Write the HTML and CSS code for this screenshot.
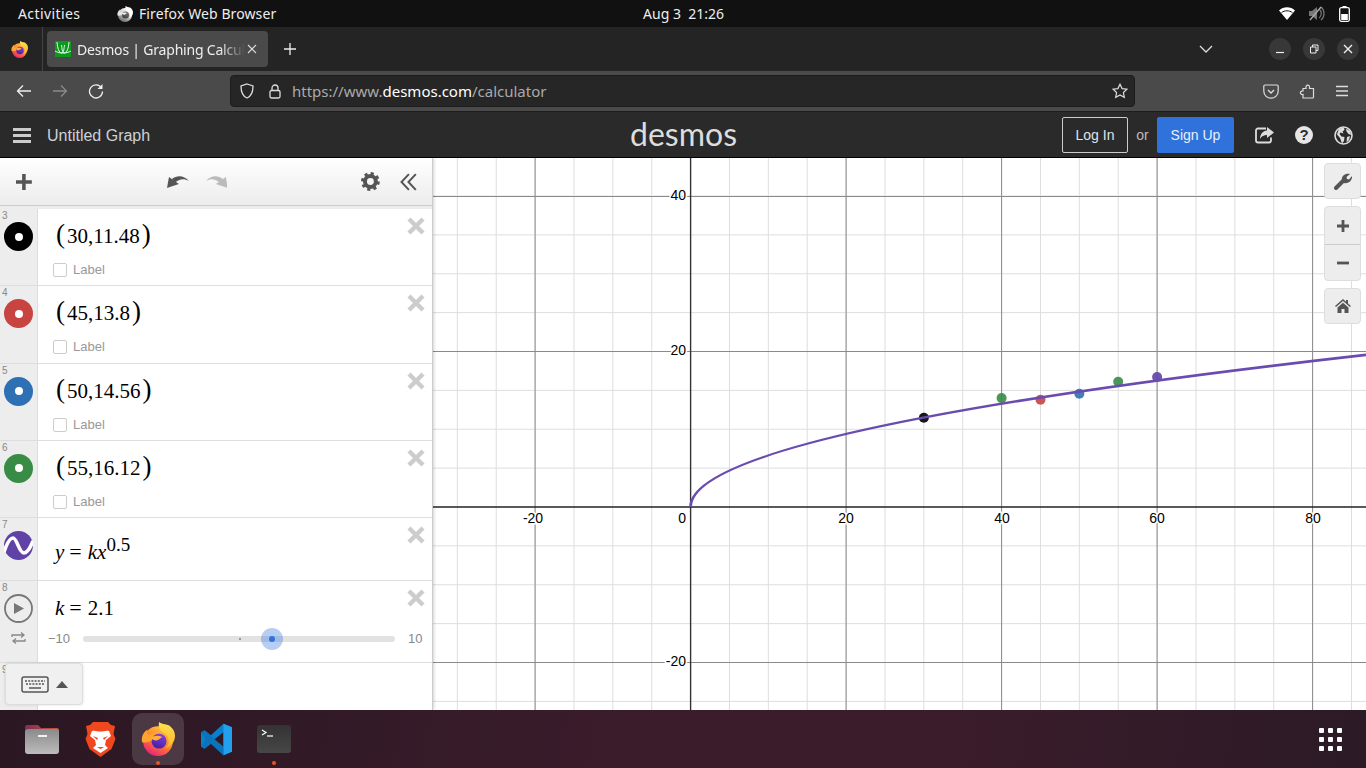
FILE: index.html
```html
<!DOCTYPE html>
<html lang="en">
<head>
    <meta charset="UTF-8">
    <meta name="viewport" content="width=device-width, initial-scale=1.0">
    <title>Desmos | Graphing Calculator</title>
    <link rel="stylesheet" href="styles.css">
</head>
<body>
    <svg class="defs" width="0" height="0">
        <defs>
            <linearGradient id="foxBody" x1="0.85" y1="0.05" x2="0.3" y2="1">
                <stop offset="0" stop-color="#ffd03d"/>
                <stop offset="0.55" stop-color="#ff7a2e"/>
                <stop offset="1" stop-color="#ec1f7d"/>
            </linearGradient>
            <linearGradient id="foxFlame" x1="0.5" y1="0" x2="0.5" y2="1">
                <stop offset="0" stop-color="#ffe14d"/>
                <stop offset="1" stop-color="#ffb52e"/>
            </linearGradient>
            <linearGradient id="foxCore" x1="0.7" y1="0" x2="0.3" y2="1">
                <stop offset="0" stop-color="#8a3fe0"/>
                <stop offset="1" stop-color="#3f1fa0"/>
            </linearGradient>
            <linearGradient id="folderBody" x1="0" y1="0" x2="0" y2="1">
                <stop offset="0" stop-color="#8a8a8a"/>
                <stop offset="1" stop-color="#bcbcbc"/>
            </linearGradient>
            <linearGradient id="folderTab" x1="0" y1="0" x2="1" y2="0">
                <stop offset="0" stop-color="#7d2f55"/>
                <stop offset="1" stop-color="#c8553a"/>
            </linearGradient>
            <linearGradient id="termBody" x1="0" y1="0" x2="0" y2="1">
                <stop offset="0" stop-color="#333"/>
                <stop offset="1" stop-color="#474747"/>
            </linearGradient>
            <symbol id="firefox" viewBox="0 0 32 32">
                <circle cx="16" cy="18" r="14" fill="url(#foxBody)"/>
                <path d="M17 0c-1 5 1 8 4 10 3 1 5 4 5 8 0 3-1 5-3 7 5-2 9-6 9-12 0-5-3-8-6-10-3-1-7-1-9-3z" fill="url(#foxFlame)"/>
                <path d="M1 19c-1-5 1-9 5-12-1 3 0 5 2 5 3-2 7-2 10 1l-5 4c-4 1-8 3-12 2z" fill="#ffa42e"/>
                <circle cx="17" cy="18" r="7" fill="url(#foxCore)"/>
                <path d="M9 15c3-2 7-3 11-1l-4 3c-2 1-5 0-7-2z" fill="#ffb03a"/>
            </symbol>
            <symbol id="closeX" viewBox="0 0 18 18">
                <path d="M2 2l14 14M16 2L2 16" fill="none" stroke="#ccc" stroke-width="4.400"/>
            </symbol>
        </defs>
    </svg>

    <div class="topbar">
        <div class="top-left">
            <span class="activities">Activities</span>
            <span class="app-name">
                <svg class="gray-fox" width="16" height="16"><use href="#firefox"/></svg>
                Firefox Web Browser
            </span>
        </div>
        <div class="top-clock">Aug 3&nbsp;&nbsp;21:26</div>
        <div class="top-right">
            <svg width="16" height="13" viewBox="0 0 16 13"><path d="M0 3.500C4.500-.8 11.500-.8 16 3.500L8 13z" fill="#fff"/><path d="M2.500 5.600c3-2.400 8-2.400 11 0" fill="none" stroke="#111" stroke-width="1"/></svg>
            <svg width="16" height="15" viewBox="0 0 16 15"><path d="M0 5h3l5-4v13l-5-4H0z" fill="#777"/><path d="M10 3c3 2 3 7 0 9M12 1c4 3 4 10 0 13" fill="none" stroke="#777" stroke-width="1.200"/><path d="M1 14L12 1" stroke="#aaa" stroke-width="1.400"/></svg>
            <svg width="11" height="16" viewBox="0 0 11 16"><rect x="0.700" y="1.700" width="9.600" height="13.600" rx="1.500" fill="none" stroke="#fff" stroke-width="1.300"/><rect x="3.500" y="0" width="4" height="2" fill="#fff"/><rect x="2.200" y="8" width="6.600" height="6" fill="#fff"/></svg>
        </div>
    </div>

    <div class="tabstrip">
        <div class="ff-menu"><svg width="17" height="17"><use href="#firefox"/></svg></div>
        <div class="tab">
            <svg class="favicon" width="16" height="16" viewBox="0 0 16 16"><rect width="16" height="16" fill="#0a9a1e"/><path d="M2 1c.5 6 2 11 4.500 11S9 7 9.500 4M14 1c-.5 6-2 11-4.500 11S7 7 6.500 4M0 10c2 1 4 2 8 2s6-1 8-2" fill="none" stroke="#eaf6ea" stroke-width="1"/></svg>
            <span class="tab-title">Desmos | Graphing Calculator</span>
            <svg class="tab-close" width="10" height="10" viewBox="0 0 10 10"><path d="M1 1l8 8M9 1L1 9" stroke="#ddd" stroke-width="1.100"/></svg>
        </div>
        <svg class="new-tab" width="14" height="14" viewBox="0 0 14 14"><path d="M7 1v12M1 7h12" stroke="#eee" stroke-width="1.300"/></svg>
        <div class="tab-spacer"></div>
        <svg class="tab-list" width="14" height="8" viewBox="0 0 14 8"><path d="M1 1l6 6 6-6" fill="none" stroke="#ddd" stroke-width="1.300"/></svg>
        <div class="win-btns">
            <span class="win-btn"><svg width="10" height="10" viewBox="0 0 10 10"><path d="M1 8.500h8" stroke="#eee" stroke-width="1.200"/></svg></span>
            <span class="win-btn"><svg width="10" height="10" viewBox="0 0 10 10"><path d="M1.500 3h5.500v6H1.500zM3.500 3V1h5.500v5.500H7" fill="none" stroke="#eee" stroke-width="1"/></svg></span>
            <span class="win-btn"><svg width="10" height="10" viewBox="0 0 10 10"><path d="M1 1l8 8M9 1L1 9" stroke="#eee" stroke-width="1.400"/></svg></span>
        </div>
    </div>

    <div class="navbar">
        <svg class="nav-icon" width="16" height="14" viewBox="0 0 16 14"><path d="M15 7H1.500M7 1.500L1.500 7 7 12.500" fill="none" stroke="#eee" stroke-width="1.300"/></svg>
        <svg class="nav-icon" width="16" height="14" viewBox="0 0 16 14"><path d="M1 7h13.500M9 1.500L14.500 7 9 12.500" fill="none" stroke="#8a8a8a" stroke-width="1.300"/></svg>
        <svg class="nav-icon" width="16" height="16" viewBox="0 0 16 16"><path d="M13.500 5A6.500 6.500 0 1 0 14.500 8.500" fill="none" stroke="#eee" stroke-width="1.300"/><path d="M14.500 1v5h-5" fill="#eee"/></svg>
        <div class="urlbar">
            <svg width="14" height="16" viewBox="0 0 14 16"><path d="M7 1l6 2c0 6-1 10-6 12C2 13 1 9 1 3z" fill="none" stroke="#ddd" stroke-width="1.300"/></svg>
            <svg class="lock" width="12" height="15" viewBox="0 0 12 15"><rect x="1" y="6.500" width="10" height="7.500" rx="1.500" fill="none" stroke="#ddd" stroke-width="1.300"/><path d="M3 6.500V4a3 3 0 0 1 6 0v2.500" fill="none" stroke="#ddd" stroke-width="1.300"/></svg>
            <span class="url"><span class="url-dim">https://www.</span>desmos.com<span class="url-dim">/calculator</span></span>
            <svg class="star" width="16" height="16" viewBox="0 0 16 16"><path d="M8 1.200l2.100 4.400 4.800.6-3.500 3.300.9 4.800L8 12l-4.300 2.300.9-4.800L1.100 6.200l4.800-.6z" fill="none" stroke="#ddd" stroke-width="1.200"/></svg>
        </div>
        <div class="nav-right">
            <svg width="16" height="15" viewBox="0 0 16 15"><path d="M2 1h12a1.200 1.200 0 0 1 1.200 1.200V7A7.200 7.200 0 0 1 .8 7V2.200A1.200 1.200 0 0 1 2 1z" fill="none" stroke="#ddd" stroke-width="1.200"/><path d="M5 6l3 3 3-3" fill="none" stroke="#ddd" stroke-width="1.400"/></svg>
            <svg width="16" height="16" viewBox="0 0 16 16"><path d="M4 15H13.500a1 1 0 0 0 1-1V5.500H10.500C11.500 1 6 1 7 5.500H4V8C.5 7.500.5 12 4 11.500z" fill="none" stroke="#ddd" stroke-width="1.200"/></svg>
            <svg width="14" height="12" viewBox="0 0 14 12"><path d="M1 1.500h12M1 6h12M1 10.500h12" stroke="#ddd" stroke-width="1.300"/></svg>
        </div>
    </div>

    <header class="dcg-header">
        <div class="menu-bars"><span></span><span></span><span></span></div>
        <div class="graph-title">Untitled Graph</div>
        <div class="logo">desmos</div>
        <div class="header-right">
            <a class="btn-login">Log In</a>
            <span class="or">or</span>
            <a class="btn-signup">Sign Up</a>
            <svg class="header-icon" width="19" height="18" viewBox="0 0 19 18"><path d="M11 2.500H3a2 2 0 0 0-2 2v10a2 2 0 0 0 2 2h11a2 2 0 0 0 2-2v-3" fill="none" stroke="#ddd" stroke-width="1.800"/><path d="M12 1l7 5.500-7 5.500V9C9 9 6.500 10 5 13c0-5 3-8 7-8.500z" fill="#ddd"/></svg>
            <svg class="header-icon" width="18" height="18" viewBox="0 0 18 18"><circle cx="9" cy="9" r="9" fill="#e6e6e6"/><text x="9" y="14" class="help-mark">?</text></svg>
            <svg class="header-icon" width="19" height="19" viewBox="0 0 19 19"><circle cx="9.500" cy="9.500" r="8.500" fill="#2a2a2a" stroke="#ddd" stroke-width="1.600"/><path d="M5 2.500l5-1 .5 2.500-2 1.500 1 2-3-1-1 1.500 2 2.500 3 .5-.5 4-2 2.500L6 12 3 8.500zM12 2.500l4 2.500 1 4-2.500-1-2-2.500zM13 11l3-1-1 4-2.500 2.500z" fill="#ddd"/></svg>
        </div>
    </header>

    <div class="main">
        <aside class="sidebar">
            <div class="exp-toolbar">
                <svg class="add" width="18" height="18" viewBox="0 0 18 18"><path d="M9 1v16M1 9h16" stroke="#555" stroke-width="3.600"/></svg>
                <svg class="undo" width="22" height="13" viewBox="0 0 22 13"><path d="M0 13L2 2l10 7z" fill="#555"/><path d="M5 4C10 0 17 0 22 6 17 3 12 4 8 8z" fill="#555"/></svg>
                <svg class="redo" width="22" height="13" viewBox="0 0 22 13"><path d="M22 13L20 2 10 9z" fill="#bbb"/><path d="M17 4C12 0 5 0 0 6 5 3 10 4 14 8z" fill="#bbb"/></svg>
                <svg class="gear" width="19" height="19" viewBox="0 0 19 19"><circle cx="9.500" cy="9.500" r="5.500" fill="none" stroke="#555" stroke-width="4"/><circle cx="9.500" cy="9.500" r="8" fill="none" stroke="#555" stroke-width="3" stroke-dasharray="3.100 3.183"/></svg>
                <svg class="collapse" width="17" height="18" viewBox="0 0 17 18"><path d="M9 1L1.500 9 9 17M16 1L8.500 9 16 17" fill="none" stroke="#555" stroke-width="2"/></svg>
            </div>

            <div class="exp-list">
                <div class="exp-row point-row">
                    <div class="gutter">
                        <span class="row-num">3</span>
                        <span class="swatch swatch-black"></span>
                    </div>
                    <div class="exp-body">
                        <div class="math"><span class="paren">(</span>30,11.48<span class="paren">)</span></div>
                        <label class="point-label"><span class="check"></span>Label</label>
                    </div>
                    <svg class="row-close" width="18" height="18"><use href="#closeX"/></svg>
                </div>
                <div class="exp-row point-row">
                    <div class="gutter">
                        <span class="row-num">4</span>
                        <span class="swatch swatch-red"></span>
                    </div>
                    <div class="exp-body">
                        <div class="math"><span class="paren">(</span>45,13.8<span class="paren">)</span></div>
                        <label class="point-label"><span class="check"></span>Label</label>
                    </div>
                    <svg class="row-close" width="18" height="18"><use href="#closeX"/></svg>
                </div>
                <div class="exp-row point-row">
                    <div class="gutter">
                        <span class="row-num">5</span>
                        <span class="swatch swatch-blue"></span>
                    </div>
                    <div class="exp-body">
                        <div class="math"><span class="paren">(</span>50,14.56<span class="paren">)</span></div>
                        <label class="point-label"><span class="check"></span>Label</label>
                    </div>
                    <svg class="row-close" width="18" height="18"><use href="#closeX"/></svg>
                </div>
                <div class="exp-row point-row">
                    <div class="gutter">
                        <span class="row-num">6</span>
                        <span class="swatch swatch-green"></span>
                    </div>
                    <div class="exp-body">
                        <div class="math"><span class="paren">(</span>55,16.12<span class="paren">)</span></div>
                        <label class="point-label"><span class="check"></span>Label</label>
                    </div>
                    <svg class="row-close" width="18" height="18"><use href="#closeX"/></svg>
                </div>
                <div class="exp-row curve-row">
                    <div class="gutter">
                        <span class="row-num">7</span>
                        <svg class="wave" width="29" height="29" viewBox="0 0 29 29"><circle cx="14.500" cy="14.500" r="14.500" fill="#6042a6"/><path d="M0 21C3 12 6 7 9 7c4 0 6 15 11 15 4 0 7-7 9-12" fill="none" stroke="#fff" stroke-width="3.600"/></svg>
                    </div>
                    <div class="exp-body">
                        <div class="math formula"><i>y</i><span class="eq">=</span><i>kx</i><sup>0.5</sup></div>
                    </div>
                    <svg class="row-close" width="18" height="18"><use href="#closeX"/></svg>
                </div>
                <div class="exp-row slider-row">
                    <div class="gutter">
                        <span class="row-num">8</span>
                        <svg width="29" height="29" viewBox="0 0 29 29" class="wave"><circle cx="14.500" cy="14.500" r="13.500" fill="none" stroke="#777" stroke-width="1.800"/><path d="M10 9l10 5.500L10 20z" fill="#777"/></svg>
                        <svg class="loop" width="15" height="12" viewBox="0 0 15 12"><path d="M1 5V3h11M10 .5L13 3l-3 2.500M14 7v2H3M5 6.500L2 9l3 2.500" fill="none" stroke="#888" stroke-width="1.300"/></svg>
                    </div>
                    <div class="exp-body">
                        <div class="math formula-k"><i>k</i><span class="eq">=</span>2.1</div>
                        <div class="slider">
                            <span class="slider-min">−10</span>
                            <div class="track">
                                <span class="tick"></span>
                                <span class="handle" style="left: 60.5%"></span>
                            </div>
                            <span class="slider-max">10</span>
                        </div>
                    </div>
                    <svg class="row-close" width="18" height="18"><use href="#closeX"/></svg>
                </div>
                <div class="exp-row empty-row">
                    <div class="gutter">
                        <span class="row-num">9</span>
                    </div>
                </div>
            </div>

            <div class="keypad-btn">
                <svg width="28" height="17" viewBox="0 0 28 17"><rect x="1" y="1" width="26" height="15" rx="2" fill="none" stroke="#555" stroke-width="1.500"/><path d="M4 5h20M5 8h18" stroke="#555" stroke-width="1.500" stroke-dasharray="2 1.200"/><path d="M8 12h12" stroke="#555" stroke-width="1.500"/></svg>
                <span class="caret"></span>
            </div>
        </aside>

        <section class="graph">
            <svg class="graph-canvas" width="933" height="552" viewBox="433 158 933 552">
                <g class="grid-minor">
                    <path d="M457.350 158V710M496.225 158V710M535.100 158V710M573.975 158V710M612.850 158V710M651.725 158V710M729.475 158V710M768.350 158V710M807.225 158V710M846.100 158V710M884.975 158V710M923.850 158V710M962.725 158V710M1001.600 158V710M1040.475 158V710M1079.350 158V710M1118.225 158V710M1157.100 158V710M1195.975 158V710M1234.850 158V710M1273.725 158V710M1312.600 158V710M1351.475 158V710"/>
                    <path d="M433 157.125H1366M433 196H1366M433 234.875H1366M433 273.750H1366M433 312.625H1366M433 351.500H1366M433 390.375H1366M433 429.250H1366M433 468.125H1366M433 545.875H1366M433 584.750H1366M433 623.625H1366M433 662.500H1366M433 701.375H1366"/>
                </g>
                <path class="grid-major" d="M535.100 158V710M846.100 158V710M1001.600 158V710M1157.100 158V710M1312.600 158V710M433 196.500H1366M433 351.500H1366M433 662.500H1366"/>
                <path class="axis-y" d="M690.600 158V710"/>
                <path class="axis-x" d="M433 507H1366"/>

                <text x="533" y="523" class="tick-label mid">-20</text>
                <text x="686" y="523" class="tick-label end">0</text>
                <text x="846" y="523" class="tick-label mid">20</text>
                <text x="1002" y="523" class="tick-label mid">40</text>
                <text x="1157" y="523" class="tick-label mid">60</text>
                <text x="1313" y="523" class="tick-label mid">80</text>
                <text x="686" y="200" class="tick-label end">40</text>
                <text x="686" y="355" class="tick-label end">20</text>
                <text x="686" y="666" class="tick-label end">-20</text>

                <circle cx="923.850" cy="417.700" r="5" fill="#000" opacity="0.9"/>
                <circle cx="1001.600" cy="398.100" r="5" fill="#388c46" opacity="0.9"/>
                <circle cx="1040.500" cy="399.700" r="5" fill="#c74440" opacity="0.9"/>
                <circle cx="1079.350" cy="393.800" r="5" fill="#2d70b3" opacity="0.9"/>
                <circle cx="1118.200" cy="381.700" r="5" fill="#388c46" opacity="0.9"/>
                <circle cx="1157.100" cy="377" r="5" fill="#6042a6" opacity="0.9"/>
                <path class="curve" d="M690.600 507Q690.600 430.900 1366 354.820"/>
            </svg>

            <div class="graph-controls">
                <div class="ctl-box">
                    <button class="ctl"><svg width="18" height="18" viewBox="0 0 18 18"><path d="M2 16l7-7" stroke="#555" stroke-width="4" stroke-linecap="round"/><path d="M8 9c-1-4 2-8 8-7l-3.500 3 .5 2 2 .5L18 4c.5 5-4 8-8 7z" fill="#555"/></svg></button>
                </div>
                <div class="ctl-box">
                    <button class="ctl ctl-split"><svg width="14" height="14" viewBox="0 0 14 14"><path d="M7 1v12M1 7h12" stroke="#555" stroke-width="2.800"/></svg></button>
                    <button class="ctl"><svg width="14" height="14" viewBox="0 0 14 14"><path d="M1 7h12" stroke="#555" stroke-width="2.800"/></svg></button>
                </div>
                <div class="ctl-box">
                    <button class="ctl"><svg width="16" height="14" viewBox="0 0 16 14"><path d="M8 0L0 7l1 1 7-6 7 6 1-1-3-2.600V1h-2v1.700zM2.500 8.500L8 3.800l5.500 4.700V14H9.500v-4h-3v4h-4z" fill="#555"/></svg></button>
                </div>
            </div>
        </section>
    </div>

    <footer class="dock">
        <div class="dock-app">
            <svg width="34" height="32" viewBox="0 0 34 32"><path d="M0 4a2 2 0 0 1 2-2h11l3 3h16a2 2 0 0 1 2 2v6H0z" fill="url(#folderTab)"/><rect y="6" width="34" height="25" rx="3" fill="url(#folderBody)"/><rect x="13" y="12" width="9" height="2" fill="#f2f2f2"/></svg>
        </div>
        <div class="dock-app">
            <svg width="31" height="36" viewBox="0 0 31 36"><path d="M8 1h15l3 3 4 1-1.500 8 2 5-4 10-11 8-11-8-4-10 2-5L1 5l4-1z" fill="#f1471f"/><path d="M7 10c3-1 5 .5 8.500.5S21 9 24 10l2 5-5 4-1 5 3 3-7.500 5L8 27l3-3-1-5-5-4z" fill="#fff"/><path d="M8 15l5 2-1 2zM23 15l-5 2 1 2zM12 26h7l-3.500 2z" fill="#f1471f"/></svg>
        </div>
        <div class="dock-app active">
            <svg width="34" height="34"><use href="#firefox"/></svg>
            <span class="running"></span>
        </div>
        <div class="dock-app">
            <svg width="33" height="33" viewBox="0 0 100 100"><path d="M71 2L33 37 14 22 3 28v44l11 6 19-15 38 35 26-12V13zM71 28v44L43 50z" fill="#0a7fcb" fill-rule="evenodd"/><path d="M71 2l26 11v74L71 98z" fill="#22a0ee"/><path d="M3 28l11-6 57 50v26L33 63 14 78 3 72l14-22z" fill="#0a6db0" opacity="0.650"/></svg>
        </div>
        <div class="dock-app">
            <svg width="34" height="28" viewBox="0 0 34 28"><rect width="34" height="28" rx="3" fill="url(#termBody)"/><path d="M5 5l4 2.500L5 10" fill="none" stroke="#fff" stroke-width="1.200"/><path d="M10 11h6" stroke="#fff" stroke-width="1.200"/></svg>
            <span class="running"></span>
        </div>
        <div class="dock-spacer"></div>
        <div class="app-grid">
            <span></span><span></span><span></span>
            <span></span><span></span><span></span>
            <span></span><span></span><span></span>
        </div>
    </footer>
</body>
</html>
```

FILE: styles.css
```css
* {
    box-sizing: border-box;
}

html, body {
    margin: 0;
    padding: 0;
    width: 1366px;
    height: 768px;
    overflow: hidden;
}

body {
    display: flex;
    flex-direction: column;
    background-color: #fff;
    font-family: "Liberation Sans", Arial, sans-serif;
}

.defs {
    position: absolute;
}

/* system top bar */
.topbar {
    flex: 0 0 27px;
    display: grid;
    grid-template-columns: 1fr auto 1fr;
    align-items: center;
    padding: 0 16px 0 18px;
    background-color: #111;
    color: #eee;
    font-family: "Noto Sans", sans-serif;
    font-size: 14px;
}

.top-left {
    display: flex;
    align-items: center;
}

.activities {
    width: 99px;
    letter-spacing: 0.4px;
}

.app-name {
    display: flex;
    align-items: center;
    gap: 6px;
    letter-spacing: 0.1px;
}

.gray-fox {
    filter: grayscale(1) brightness(1.3);
}

.top-clock {
    margin-left: -1px;
}

.top-right {
    display: flex;
    align-items: center;
    justify-content: flex-end;
    gap: 14px;
}

/* firefox tabs */
.tabstrip {
    flex: 0 0 44px;
    display: flex;
    align-items: center;
    background-color: #242424;
}

.ff-menu {
    width: 43px;
    height: 44px;
    padding-right: 3px;
    display: flex;
    align-items: center;
    justify-content: center;
    border-right: 1px solid #444;
}

.tab {
    width: 221px;
    height: 36px;
    margin-left: 4px;
    padding: 0 11px 0 8px;
    display: flex;
    align-items: center;
    background-color: #4a4a4a;
    border-radius: 4px;
}

.favicon {
    flex: none;
}

.tab-title {
    flex: 1;
    margin-left: 6px;
    overflow: hidden;
    white-space: nowrap;
    color: #eee;
    font-family: "Noto Sans", sans-serif;
    font-size: 14px;
    letter-spacing: -0.2px;
    -webkit-mask-image: linear-gradient(to right, #000 85%, transparent);
    mask-image: linear-gradient(to right, #000 85%, transparent);
}

.tab-close {
    flex: none;
    margin-left: 2px;
}

.new-tab {
    margin-left: 15px;
}

.tab-spacer {
    flex: 1;
}

.tab-list {
    margin-right: 56px;
}

.win-btns {
    display: flex;
    gap: 12px;
    margin-right: 7px;
}

.win-btn {
    width: 22px;
    height: 22px;
    display: flex;
    align-items: center;
    justify-content: center;
    border-radius: 50%;
    background-color: #383838;
}

/* firefox toolbar */
.navbar {
    flex: 0 0 40px;
    display: flex;
    align-items: center;
    padding-left: 16px;
    background-color: #4a4a4a;
}

.nav-icon {
    margin-right: 20px;
}

.urlbar {
    width: 905px;
    height: 32px;
    margin-left: 106px;
    padding: 0 6px 0 9px;
    display: flex;
    align-items: center;
    background-color: #262626;
    border: 1px solid #1c1c1c;
    border-radius: 4px;
}

.lock {
    margin-left: 15px;
}

.url {
    flex: 1;
    margin-left: 11px;
    color: #fff;
    font-family: "Noto Sans", sans-serif;
    font-size: 15px;
}

.url-dim {
    color: #aaa;
}

.nav-right {
    flex: 1;
    display: flex;
    align-items: center;
    justify-content: flex-end;
    gap: 20px;
    padding-right: 17px;
}

/* desmos header */
.dcg-header {
    flex: 0 0 47px;
    display: flex;
    align-items: center;
    padding: 1px 13px 0;
    background-color: #2a2a2a;
    border-top: 1px solid #1c1c1c;
    border-bottom: 1px solid #000;
    position: relative;
}

.menu-bars {
    width: 18px;
    display: flex;
    flex-direction: column;
    gap: 3px;
}

.menu-bars span {
    height: 3px;
    background-color: #ccc;
}

.graph-title {
    margin-left: 16px;
    padding-top: 1px;
    color: #ccd2d8;
    font-size: 16px;
}

.logo {
    position: absolute;
    left: 630px;
    top: 1px;
    color: #ddd;
    font-family: Lato, sans-serif;
    font-size: 32px;
    line-height: 42px;
}

.header-right {
    flex: 1;
    display: flex;
    align-items: center;
    justify-content: flex-end;
}

.btn-login, .btn-signup {
    height: 36px;
    display: flex;
    align-items: center;
    justify-content: center;
    border-radius: 2px;
    color: #dde4ea;
    font-size: 14px;
}

.btn-login {
    width: 66px;
    border: 1px solid #ccc;
}

.or {
    width: 29px;
    text-align: center;
    color: #bbb;
    font-size: 14px;
}

.btn-signup {
    width: 77px;
    background-color: #2f72dc;
    color: #e8f0fa;
}

.header-icon {
    margin-left: 21px;
}

.help-mark {
    fill: #2a2a2a;
    font-size: 15px;
    font-weight: bold;
    text-anchor: middle;
}

/* main area */
.main {
    flex: 0 0 552px;
    display: flex;
    position: relative;
    overflow: hidden;
}

.sidebar {
    flex: 0 0 433px;
    min-width: 0;
    display: flex;
    flex-direction: column;
    position: relative;
    border-right: 1px solid #ccc;
    box-shadow: 1px 0 3px rgba(0, 0, 0, 0.18);
    z-index: 2;
    background-color: #fff;
}

.exp-toolbar {
    flex: 0 0 48px;
    display: flex;
    align-items: center;
    padding: 0 15px;
    background: linear-gradient(#fff, #ececec);
    border-bottom: 1px solid #ccc;
}

.add {
    margin-right: 134px;
}

.undo {
    margin-right: 17px;
}

.redo {
    margin-right: 134px;
}

.collapse {
    margin-left: 20px;
}

.exp-list {
    flex: 1;
    display: flex;
    flex-direction: column;
    border-top: 3px solid #ececec;
}

.exp-row {
    display: flex;
    border-bottom: 1px solid #ddd;
}

.point-row {
    flex: 0 0 77.25px;
}

.curve-row {
    flex: 0 0 63px;
}

.slider-row {
    flex: 0 0 82px;
}

.empty-row {
    flex: 1;
    border-bottom: none;
}

.gutter {
    flex: 0 0 38px;
    display: flex;
    flex-direction: column;
    background-color: #ededed;
    border-right: 1px solid #ddd;
}

.row-num {
    height: 13px;
    padding-left: 2px;
    color: #888;
    font-size: 10px;
    line-height: 13px;
}

.swatch {
    width: 29px;
    height: 29px;
    margin-left: 4px;
    border-radius: 50%;
    display: flex;
    align-items: center;
    justify-content: center;
}

.swatch::after {
    content: "";
    width: 8px;
    height: 8px;
    border-radius: 50%;
    background-color: #fff;
}

.swatch-black {
    background-color: #000;
}

.swatch-red {
    background-color: #c74440;
}

.swatch-blue {
    background-color: #2d70b3;
}

.swatch-green {
    background-color: #388c46;
}

.wave {
    margin-left: 4px;
}

.loop {
    margin: 9px 0 0 11px;
}

.exp-body {
    flex: 1;
    min-width: 0;
    padding: 12px 0 0 15px;
}

.math {
    height: 30px;
    margin-left: 3px;
    color: #000;
    font-family: "Liberation Serif", serif;
    font-size: 21px;
    line-height: 30px;
    white-space: nowrap;
}

.paren {
    font-size: 27px;
    font-weight: 400;
    line-height: 0;
}

.paren:first-child {
    margin-right: 2px;
}

.paren:last-child {
    margin-left: 2px;
}

.eq {
    margin: 0 6px 0 5px;
    font-size: 22px;
}

.formula {
    margin-top: 7px;
    margin-left: 2px;
}

.formula sup {
    font-size: 19px;
    line-height: 0;
    vertical-align: 8px;
}

.formula-k {
    margin-left: 2px;
}

.point-label {
    display: flex;
    align-items: center;
    margin-top: 12px;
    color: #999;
    font-size: 13px;
    line-height: 14px;
}

.check {
    width: 14px;
    height: 14px;
    margin-right: 6px;
    background-color: #fff;
    border: 1px solid #ccc;
    border-radius: 2px;
}

.row-close {
    flex: none;
    margin: 8px 7px 0 0;
}

.slider {
    display: flex;
    align-items: center;
    width: 390px;
    margin: 8px 0 0 -5px;
    color: #888;
    font-size: 13px;
}

.slider-min {
    flex: 0 0 35px;
}

.track {
    flex: 0 0 312px;
    height: 6px;
    position: relative;
    background-color: #e2e2e2;
    border-radius: 3px;
}

.tick {
    position: absolute;
    left: 50%;
    top: 2px;
    width: 2px;
    height: 2px;
    background-color: #999;
}

.handle {
    position: absolute;
    top: -8px;
    width: 22px;
    height: 22px;
    margin-left: -11px;
    border-radius: 50%;
    background-color: rgba(47, 114, 220, 0.35);
    display: flex;
    align-items: center;
    justify-content: center;
}

.handle::after {
    content: "";
    width: 6px;
    height: 6px;
    border-radius: 50%;
    background-color: #2f72dc;
}

.slider-max {
    margin-left: 13px;
}

.keypad-btn {
    position: absolute;
    left: 5px;
    top: 505px;
    width: 78px;
    height: 42px;
    display: flex;
    align-items: center;
    justify-content: center;
    gap: 7px;
    background-color: #f0f0f0;
    border: 1px solid #ddd;
    border-radius: 4px;
    box-shadow: 0 0 3px rgba(0, 0, 0, 0.12);
}

.caret {
    width: 0;
    height: 0;
    border-left: 6.5px solid transparent;
    border-right: 6.5px solid transparent;
    border-bottom: 7px solid #555;
}

/* graph paper */
.graph {
    flex: 1;
    min-width: 0;
    position: relative;
}

.graph-canvas {
    display: block;
}

.grid-minor path {
    fill: none;
    stroke: #dedede;
    stroke-width: 1;
}

.grid-major {
    fill: none;
    stroke: #8a8a8a;
    stroke-width: 1;
}

.axis-y {
    stroke: #333;
    stroke-width: 1.4;
}

.axis-x {
    stroke: #222;
    stroke-width: 1.6;
}

.curve {
    fill: none;
    stroke: #6a4cb0;
    stroke-width: 2.8;
}

.tick-label {
    fill: #000;
    font-size: 14px;
    paint-order: stroke;
    stroke: #fff;
    stroke-width: 3px;
}

.tick-label.mid {
    text-anchor: middle;
}

.tick-label.end {
    text-anchor: end;
}

.graph-controls {
    position: absolute;
    top: 5px;
    right: 5px;
    width: 37px;
    display: flex;
    flex-direction: column;
    gap: 7px;
}

.ctl-box {
    background-color: #ededed;
    border: 1px solid #ddd;
    border-radius: 4px;
}

.ctl {
    display: flex;
    width: 100%;
    height: 34px;
    padding: 0;
    align-items: center;
    justify-content: center;
    background: none;
    border: none;
}

.ctl-split {
    height: 38px;
    border-bottom: 1px solid #ccc;
}

.ctl-split + .ctl {
    height: 35px;
}

/* ubuntu dock */
.dock {
    flex: 0 0 58px;
    display: flex;
    align-items: center;
    padding: 0 24px 0 16px;
    background: linear-gradient(100deg, #2a1722 0%, #3a1c2b 45%, #3a1c2a 70%, #2c1a27 100%);
}

.dock-app {
    width: 52px;
    height: 52px;
    margin-right: 6px;
    position: relative;
    display: flex;
    align-items: center;
    justify-content: center;
    border-radius: 10px;
}

.dock-app.active {
    background-color: rgba(255, 255, 255, 0.14);
}

.running {
    position: absolute;
    left: 24px;
    bottom: 0;
    width: 4px;
    height: 4px;
    border-radius: 50%;
    background-color: #e95420;
}

.dock-spacer {
    flex: 1;
}

.app-grid {
    display: grid;
    grid-template-columns: repeat(3, 5px);
    gap: 4px;
}

.app-grid span {
    width: 5px;
    height: 5px;
    border-radius: 1px;
    background-color: #fff;
}
```
